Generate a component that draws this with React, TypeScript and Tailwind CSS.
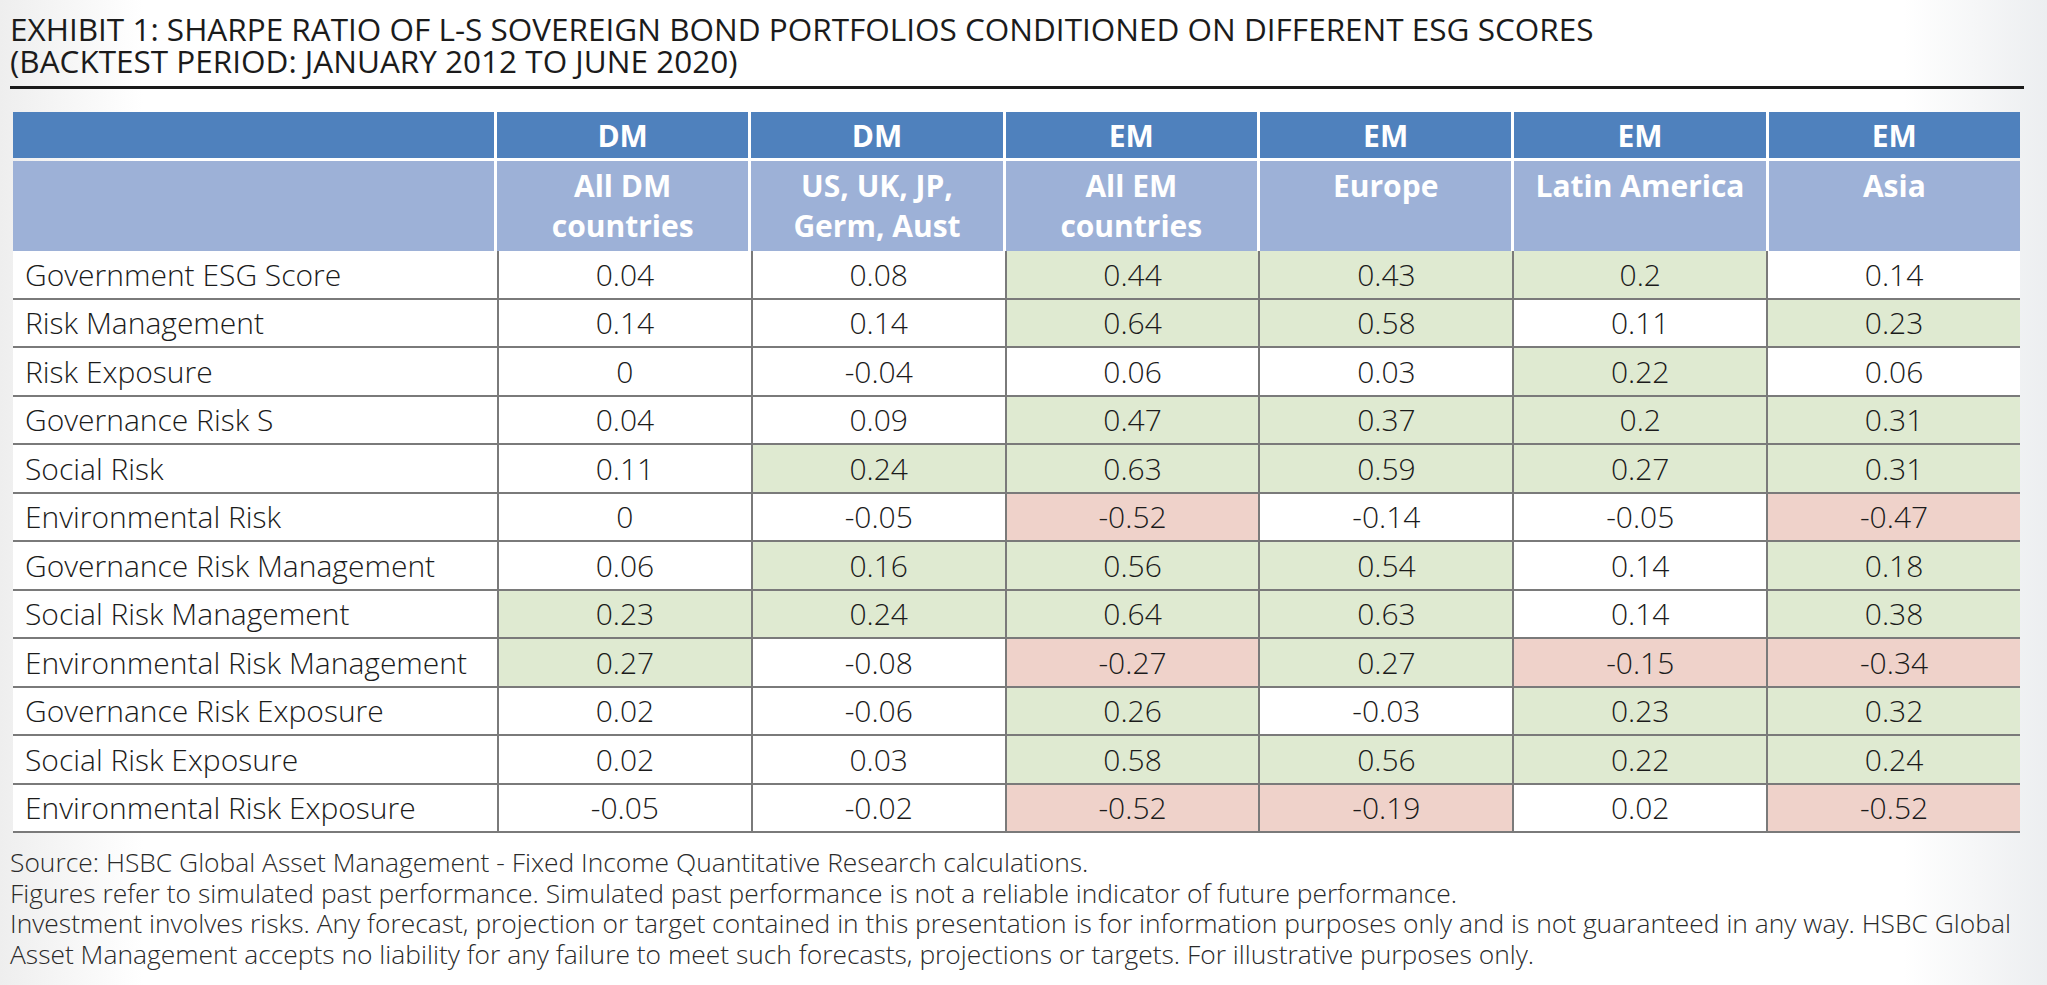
type Tone = 'w' | 'g' | 'r'

const rows: { label: string; cells: [string, Tone][] }[] = [
  { label: 'Government ESG Score', cells: [['0.04', 'w'], ['0.08', 'w'], ['0.44', 'g'], ['0.43', 'g'], ['0.2', 'g'], ['0.14', 'w']] },
  { label: 'Risk Management', cells: [['0.14', 'w'], ['0.14', 'w'], ['0.64', 'g'], ['0.58', 'g'], ['0.11', 'w'], ['0.23', 'g']] },
  { label: 'Risk Exposure', cells: [['0', 'w'], ['-0.04', 'w'], ['0.06', 'w'], ['0.03', 'w'], ['0.22', 'g'], ['0.06', 'w']] },
  { label: 'Governance Risk S', cells: [['0.04', 'w'], ['0.09', 'w'], ['0.47', 'g'], ['0.37', 'g'], ['0.2', 'g'], ['0.31', 'g']] },
  { label: 'Social Risk', cells: [['0.11', 'w'], ['0.24', 'g'], ['0.63', 'g'], ['0.59', 'g'], ['0.27', 'g'], ['0.31', 'g']] },
  { label: 'Environmental Risk', cells: [['0', 'w'], ['-0.05', 'w'], ['-0.52', 'r'], ['-0.14', 'w'], ['-0.05', 'w'], ['-0.47', 'r']] },
  { label: 'Governance Risk Management', cells: [['0.06', 'w'], ['0.16', 'g'], ['0.56', 'g'], ['0.54', 'g'], ['0.14', 'w'], ['0.18', 'g']] },
  { label: 'Social Risk Management', cells: [['0.23', 'g'], ['0.24', 'g'], ['0.64', 'g'], ['0.63', 'g'], ['0.14', 'w'], ['0.38', 'g']] },
  { label: 'Environmental Risk Management', cells: [['0.27', 'g'], ['-0.08', 'w'], ['-0.27', 'r'], ['0.27', 'g'], ['-0.15', 'r'], ['-0.34', 'r']] },
  { label: 'Governance Risk Exposure', cells: [['0.02', 'w'], ['-0.06', 'w'], ['0.26', 'g'], ['-0.03', 'w'], ['0.23', 'g'], ['0.32', 'g']] },
  { label: 'Social Risk Exposure', cells: [['0.02', 'w'], ['0.03', 'w'], ['0.58', 'g'], ['0.56', 'g'], ['0.22', 'g'], ['0.24', 'g']] },
  { label: 'Environmental Risk Exposure', cells: [['-0.05', 'w'], ['-0.02', 'w'], ['-0.52', 'r'], ['-0.19', 'r'], ['0.02', 'w'], ['-0.52', 'r']] },
]

const groups = ['DM', 'DM', 'EM', 'EM', 'EM', 'EM']
const regions = [
  ['All DM', 'countries'],
  ['US, UK, JP,', 'Germ, Aust'],
  ['All EM', 'countries'],
  ['Europe'],
  ['Latin America'],
  ['Asia'],
]

const toneBg: Record<Tone, string> = {
  w: 'bg-white',
  g: 'bg-[#dfead1]',
  r: 'bg-[#efd2ca]',
}

export default function App() {
  return (
    <div
      className="w-[2047px] h-[985px] overflow-hidden text-[#1b1b1b] bg-[linear-gradient(90deg,#eeeeee_0%,#ffffff_7%,#ffffff_93%,#eceef0_100%)]"
      style={{ fontFamily: '"Open Sans", "Liberation Sans", sans-serif' }}
    >
      <div className="pl-[10px] pt-[13px] w-[2024px]">
        <h1 className="text-[31.5px] font-normal leading-[32px] uppercase">
          <div>Exhibit 1: Sharpe ratio of L-S sovereign bond portfolios conditioned on different ESG scores</div>
          <div>(Backtest period: January 2012 to June 2020)</div>
        </h1>
        <div className="mt-[9px] h-[3px] bg-[#1a1a1a]" />
      </div>

      <div className="ml-[13px] mt-[23px] w-[2007px]">
        <div className="grid grid-cols-[481px_repeat(6,1fr)] gap-x-[3px] gap-y-[3px] text-white font-bold text-[30px]">
          <div className="h-[46px] bg-[#4f81bd]" />
          {groups.map((g, i) => (
            <div key={i} className="h-[46px] bg-[#4f81bd] flex items-center justify-center">
              {g}
            </div>
          ))}
          <div className="h-[90px] bg-[#9db1d7]" />
          {regions.map((r, i) => (
            <div key={i} className="h-[90px] bg-[#9db1d7] pt-[5px] text-center leading-[40px]">
              {r.map((line) => (
                <div key={line}>{line}</div>
              ))}
            </div>
          ))}
        </div>

        <div className="text-[30px] font-light">
          {rows.map((row) => (
            <div key={row.label} className="grid grid-cols-[484px_repeat(6,1fr)] h-[48.5px] border-b-2 border-[#7a7a7a]">
              <div className="bg-white flex items-center pl-[12px] whitespace-nowrap">{row.label}</div>
              {row.cells.map(([v, t], i) => (
                <div key={i} className={`${toneBg[t]} border-l-2 border-[#7a7a7a] flex items-center justify-center`}>
                  {v}
                </div>
              ))}
            </div>
          ))}
        </div>
      </div>

      <div className="pl-[10px] pt-[14px] text-[26.4px] font-light leading-[30.5px] text-[#2a2a2a] w-[2030px]">
        <p>Source: HSBC Global Asset Management - Fixed Income Quantitative Research calculations.</p>
        <p>Figures refer to simulated past performance. Simulated past performance is not a reliable indicator of future performance.</p>
        <p>
          Investment involves risks. Any forecast, projection or target contained in this presentation is for information purposes only and is not guaranteed in any way. HSBC Global Asset Management accepts no liability for any failure to meet such forecasts, projections or targets. For illustrative purposes only.
        </p>
      </div>
    </div>
  )
}
